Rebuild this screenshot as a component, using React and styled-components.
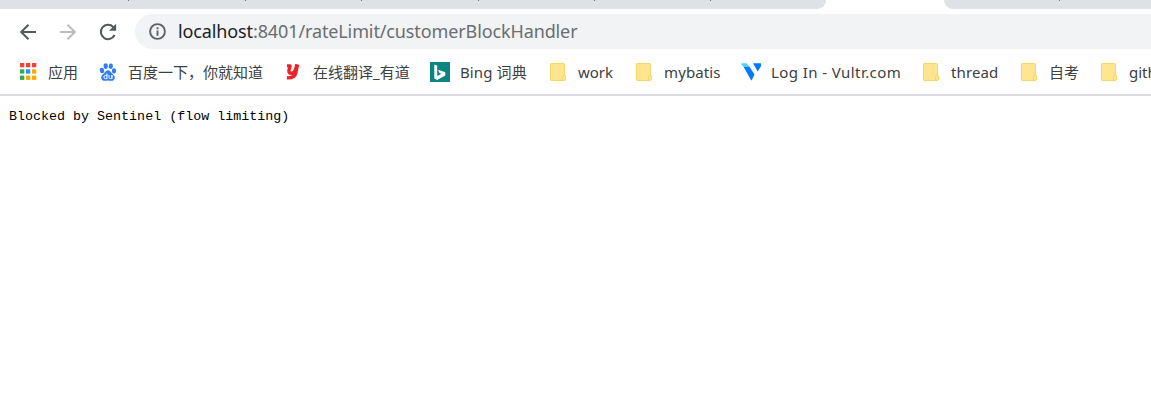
import React from 'react';
import styled, { createGlobalStyle } from 'styled-components';

const Global = createGlobalStyle`
  * { box-sizing: border-box; }
  body { margin: 0; background: #fff; overflow: hidden; }
`;
const Browser = styled.div`
  width: 100%; height: 419px; overflow: hidden; background: #fff;
  font-family: "Noto Sans", "Noto Sans CJK SC", sans-serif;
`;
const TabStrip = styled.div`
  display: flex; justify-content: space-between; height: 9px; background: #fff;
`;
const TabGroup = styled.div`
  display: flex; height: 9px; background: #dee1e6; padding-left: ${p => p.$lead}px;
  width: ${p => p.$width}px;
  border-radius: ${p => (p.$side === 'left' ? '0 0 9px 0' : '0 0 0 9px')};
`;
const TabMark = styled.span`
  width: 1px; height: 1px; margin-right: ${p => p.$gap}px; background: #777b80; flex: none;
`;
const Toolbar = styled.div`
  display: flex; align-items: center; height: 45px; padding: 0 0 0 18px;
`;
const NavButton = styled.span`
  display: flex; width: 20px; height: 20px; margin-right: 20px; color: ${p => p.$color};
`;
const AddressBar = styled.div`
  display: flex; align-items: center; flex: 1; height: 35px; margin-left: -3px;
  padding-left: 13px; border-radius: 18px 0 0 18px; background: #f1f3f4;
`;
const Url = styled.span`
  margin-left: 11px; padding-bottom: 2px; font-size: 18px; line-height: 28px; letter-spacing: -0.12px;
  color: #6a6d71; white-space: nowrap;
`;
const Host = styled.span`color: #202124;`;
const Bookmarks = styled.div`
  display: flex; align-items: center; gap: 20px; height: 42px; padding: 0 0 5px 18px;
  border-bottom: 2px solid #dadce0; overflow: hidden;
`;
const Bookmark = styled.div`
  display: flex; align-items: center; gap: 10px; flex: none; height: 35px;
`;
const Slot = styled.span`display: flex; width: 20px; height: 20px; flex: none;`;
const Label = styled.span`
  width: ${p => p.$width}px; font-size: 15px; line-height: 24px; color: #3c4043;
  white-space: nowrap; letter-spacing: ${p => p.$track || 0}px;
`;
const Page = styled.pre`
  margin: 0; padding: 12px 9px; font-family: "Liberation Mono", monospace;
  font-size: 13.35px; line-height: 18px; color: #000;
`;

const Svg = p => <svg width="20" height="20" viewBox="0 0 20 20" {...p} />;
const Back = () => <Svg fill="none" stroke="currentColor" strokeWidth="2"><path d="M18 10H3.5M10.5 2.7 3.2 10l7.3 7.3" /></Svg>;
const Forward = () => <Svg fill="none" stroke="currentColor" strokeWidth="2"><path d="M2 10h14.5M9.5 2.7l7.3 7.3-7.3 7.3" /></Svg>;
const Reload = () => <Svg><path fill="none" stroke="currentColor" strokeWidth="2.1" d="M16.6 13a7.2 7.2 0 1 1-1.4-8.1L17 6.8" /><path fill="currentColor" d="M18.1 1.7v7.1H11z" /></Svg>;
const Info = () => <Svg width="19" height="19"><circle cx="10" cy="10" r="7.8" fill="none" stroke="#5f6368" strokeWidth="2" /><path fill="#5f6368" d="M9 5.500h2v2H9zM9 9h2v5.500H9z" /></Svg>;

const APP_DOTS = ['#f44336', '#f44336', '#f44336', '#34a853', '#2196f3', '#fbab00', '#34a853', '#fbab00', '#fbab00'];
const Apps = () => <Svg>{APP_DOTS.map((c, i) => <rect key={i} x={2 + (i % 3) * 6} y={1 + Math.floor(i / 3) * 6.3} width="4.3" height="4.3" fill={c} />)}</Svg>;
const Baidu = () => (
  <Svg>
    <g fill="#2f7cf6">
      <ellipse cx="4" cy="8.5" rx="2.2" ry="2.8" transform="rotate(-12 4 8.5)" />
      <ellipse cx="7.7" cy="4.1" rx="2.1" ry="2.8" />
      <ellipse cx="12.8" cy="4.2" rx="2.1" ry="2.7" transform="rotate(12 12.8 4.2)" />
      <ellipse cx="16" cy="8.9" rx="2.1" ry="2.7" />
      <path d="M10 8.3c1.7 0 2.5 1.4 3.6 2.6 1.2 1.3 3.2 2.3 3.200 4.500 0 2.400-1.900 3.600-3.700 3.400-1.300-.1-1.800-.4-3.100-.4s-1.900.4-3.200.4c-2 0-3.700-1.200-3.600-3.400.1-2.100 1.900-3.100 3.100-4.300C7.500 9.800 8.200 8.300 10 8.300z" />
    </g>
    <path d="M9 11.300v5.400H7.600a1.700 1.700 0 1 1 0-3.400H9M11 13v2.500c0 1.600 2.900 1.600 2.900 0V13v3.900" fill="none" stroke="#fff" strokeWidth="1" />
  </Svg>
);
const Youdao = () => (
  <Svg>
    <path fill="none" stroke="#ee2228" strokeWidth="3.4" strokeLinejoin="round" d="M4 3.900h3.100L6 8.200c-.5 2.300.6 3 2.100 3 2.300 0 4.100-1.700 4.700-4.200l1-4.700M14.600 2.300l-2 9.400c-.7 3.200-3 4.400-8.700 4.100" />
  </Svg>
);
const Bing = () => <Svg><path fill="#0c8484" d="M0 0h20v20H0z" /><path fill="#fff" d="m4.300 2.500 2.900 1v10.600l4.100-2.400-2-.9-1.200-3.100 7.200 2.500v3.300l-8.100 4.600-2.900-1.700z" /></Svg>;
const Folder = () => (
  <Svg fill="#ffe58f" stroke="#f6d662">
    <rect x="2.500" y="1.500" width="14" height="17" rx=".8" />
    <path d="M14.500 18.500v-4.300l1-1.400h1l1 1v4l-1 .7z" />
  </Svg>
);
const Vultr = () => <Svg><path fill="#007bfc" d="m2.400 4.500 5.800-.2 5.300 8.300-2.700 5.500q-.4.700-.8 0zM12 1.300h7.500c1.100 0 1.700 1 1.100 1.900l-4 6.300z" /><path fill="#55d0f8" d="M.7 1.300h5.200l2.300 3.400H2.500L.3 2.300z" /></Svg>;

const BOOKMARKS = [
  [Apps, '应用', 30, 0],
  [Baidu, '百度一下，你就知道', 135, 0],
  [Youdao, '在线翻译_有道', 97, 0],
  [Bing, 'Bing 词典', 68, 0.12],
  [Folder, 'work', 36, 0],
  [Folder, 'mybatis', 57, 0.1],
  [Vultr, 'Log In - Vultr.com', 130, 0.42],
  [Folder, 'thread', 48, 0.1],
  [Folder, '自考', 30, 0],
  [Folder, 'github', 60, 0],
];

export default function App() {
  return (
    <Browser>
      <Global />
      <TabStrip>
        <TabGroup $side="left" $width={826} $lead={128}>
          {[117, 116, 117, 116, 116, 1].map((g, i) => <TabMark key={i} $gap={g - 1} />)}
        </TabGroup>
        <TabGroup $side="right" $width={207} $lead={115}><TabMark $gap={0} /></TabGroup>
      </TabStrip>
      <Toolbar>
        <NavButton $color="#55595e"><Back /></NavButton>
        <NavButton $color="#babcbe"><Forward /></NavButton>
        <NavButton $color="#55595e"><Reload /></NavButton>
        <AddressBar>
          <Info />
          <Url><Host>localhost</Host>:8401/rateLimit/customerBlockHandler</Url>
        </AddressBar>
      </Toolbar>
      <Bookmarks>
        {BOOKMARKS.map(([Icon, name, width, track]) => (
          <Bookmark key={name}><Slot><Icon /></Slot><Label $width={width} $track={track}>{name}</Label></Bookmark>
        ))}
      </Bookmarks>
      <Page>Blocked by Sentinel (flow limiting)</Page>
    </Browser>
  );
}
